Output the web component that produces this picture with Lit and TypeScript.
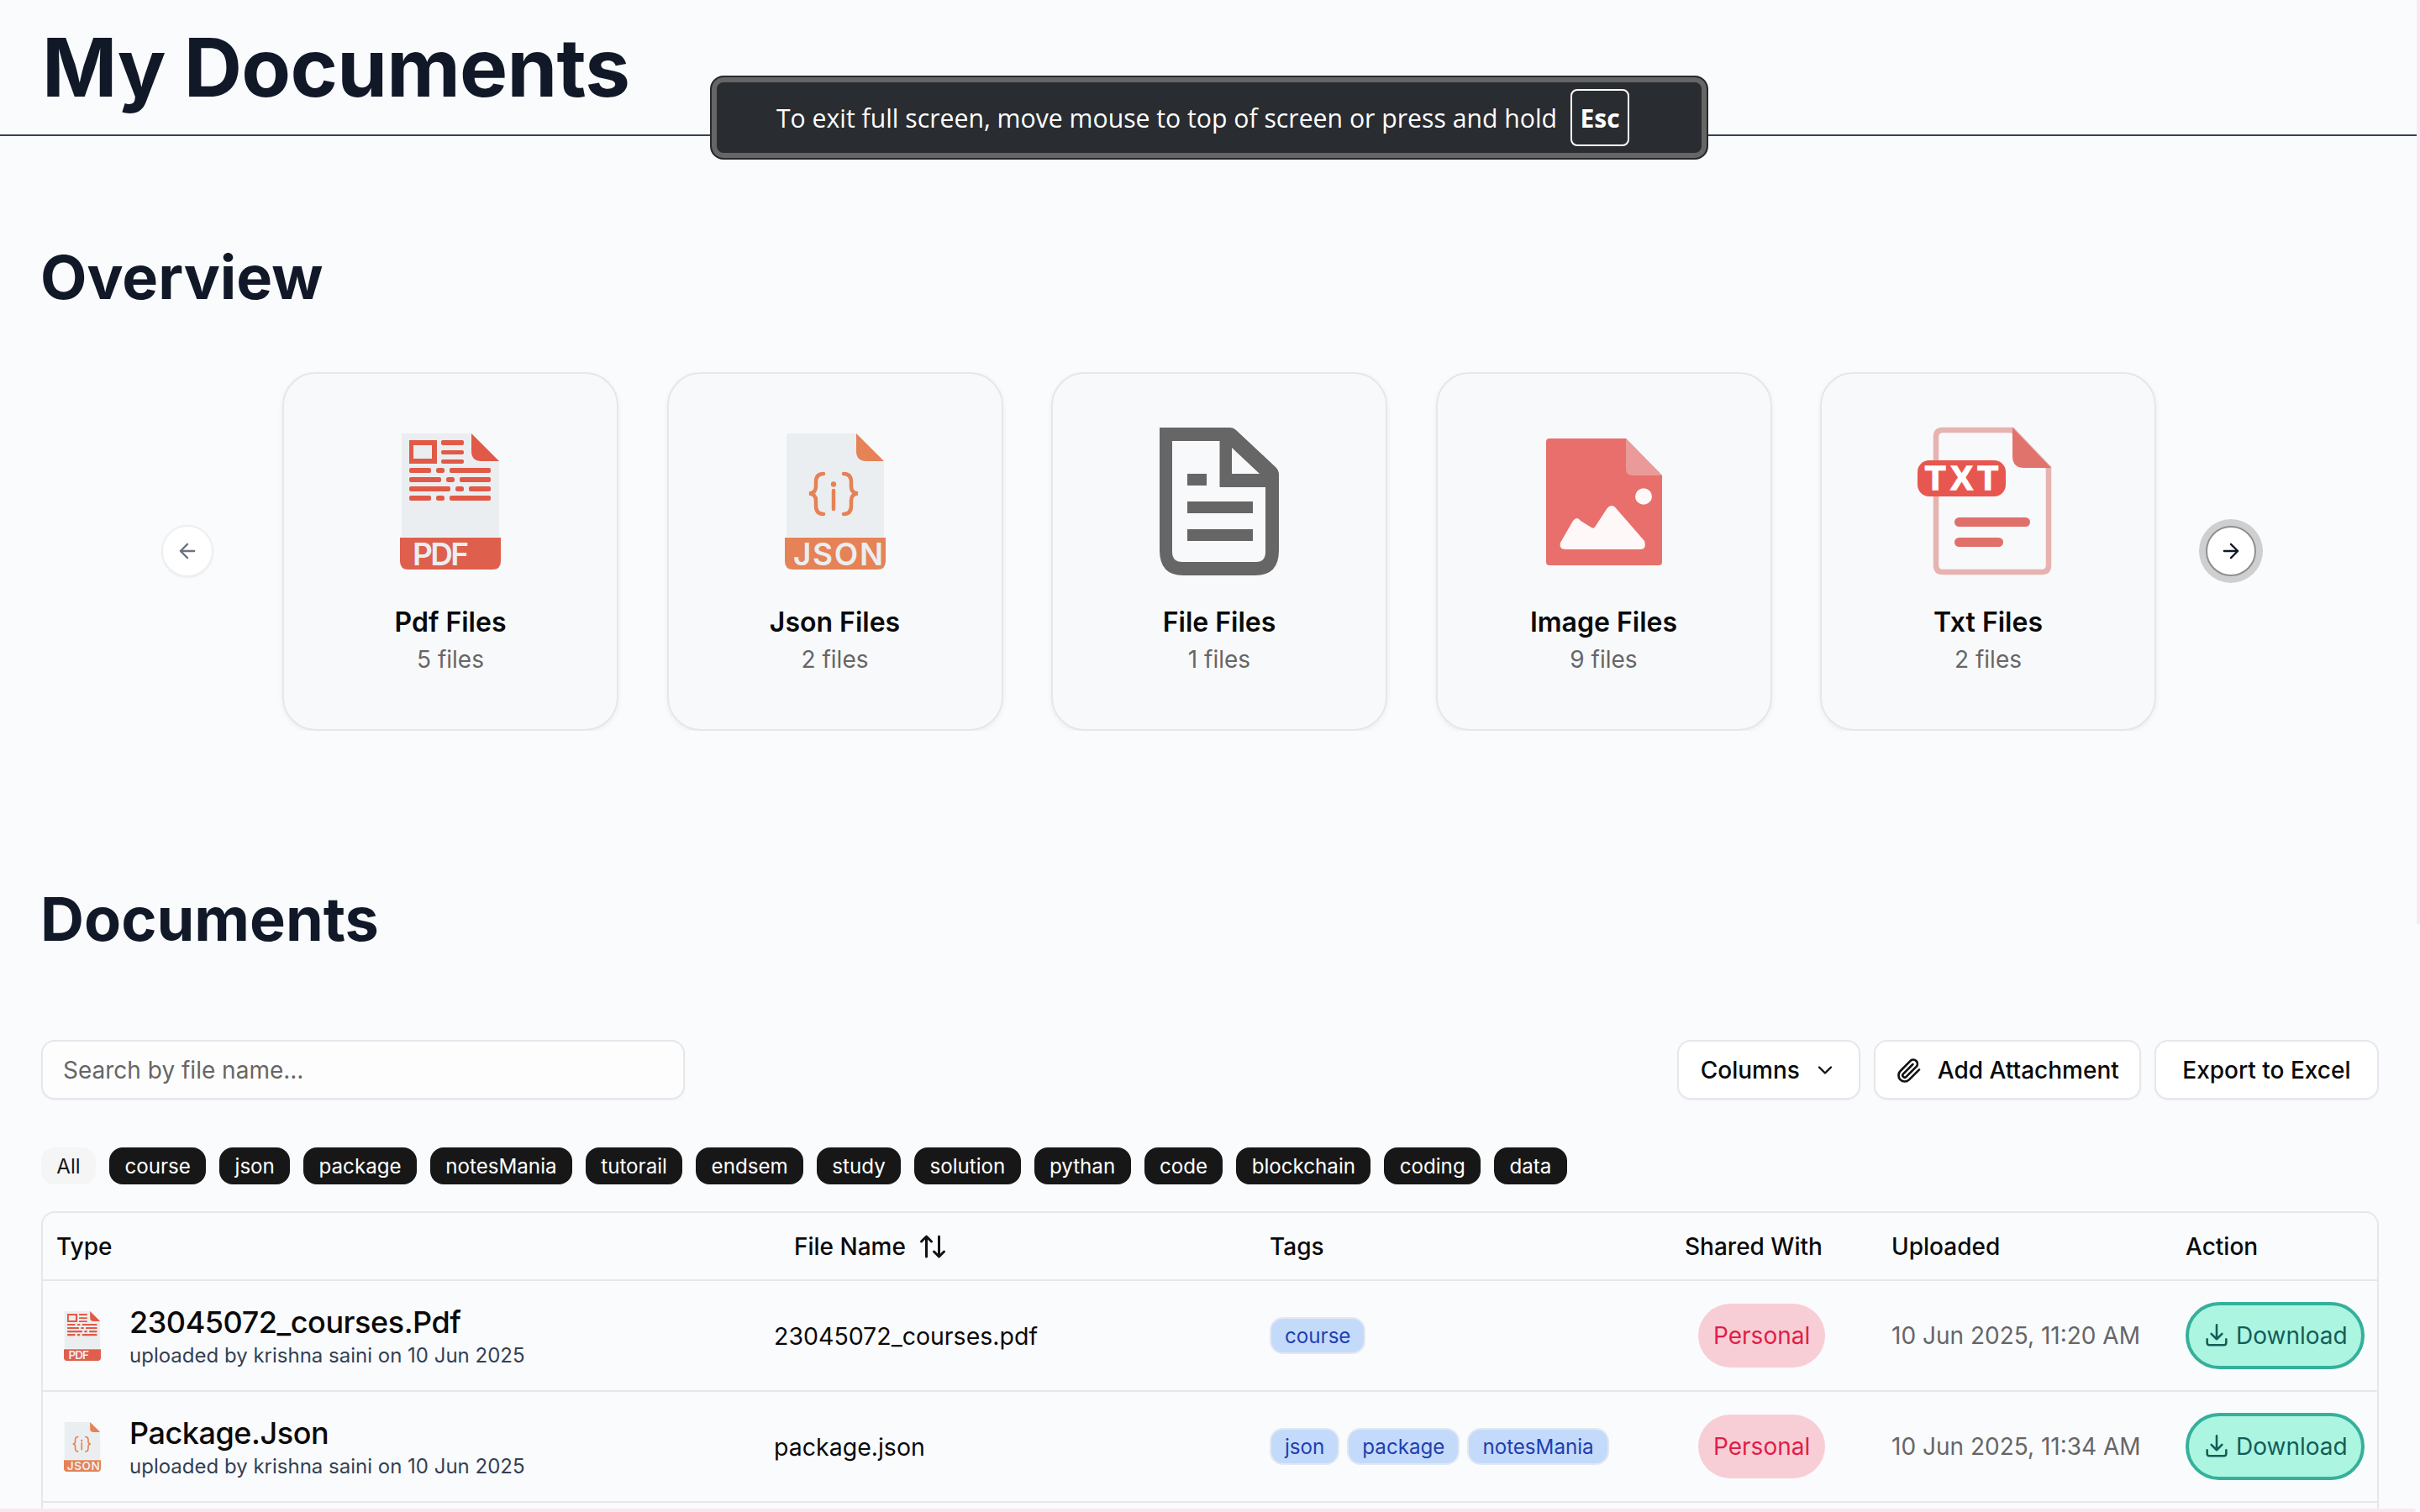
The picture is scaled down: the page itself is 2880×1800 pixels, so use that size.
import { LitElement, html, css, svg } from 'lit';
import { customElement } from 'lit/decorators.js';

const pdfIcon = svg`
  <path d="M2 0H85L118 33V123H2Z" fill="#ebeef0"/>
  <path d="M85 0 118 33H97Q85 33 85 21Z" fill="#e05a47"/>
  <path d="M11 8H44V36H11Z M16 14V30H38V14Z" fill="#e05a47" fill-rule="evenodd"/>
  <g fill="#e05a47">
    <rect x="49" y="8" width="27" height="6" rx="2"/><rect x="49" y="20" width="27" height="5" rx="2"/><rect x="49" y="31" width="27" height="5" rx="2"/>
    <rect x="11" y="41" width="26" height="6" rx="2"/><rect x="43" y="41" width="10" height="6" rx="2.5"/><rect x="59" y="41" width="49" height="6" rx="2"/>
    <rect x="11" y="52" width="38" height="6" rx="2"/><rect x="55" y="52" width="10" height="6" rx="2.5"/><rect x="71" y="52" width="37" height="6" rx="2"/>
    <rect x="11" y="63" width="49" height="6" rx="2"/><rect x="66" y="63" width="10" height="6" rx="2.5"/><rect x="82" y="63" width="26" height="6" rx="2"/>
    <rect x="11" y="74" width="26" height="6" rx="2"/><rect x="43" y="74" width="10" height="6" rx="2.5"/><rect x="59" y="74" width="49" height="6" rx="2"/>
  </g>
  <path d="M0 124H120V152Q120 162 110 162H10Q0 162 0 152Z" fill="#df5f4d"/>
  <text x="15" y="157" class="icon-label" textLength="67">PDF</text>`;

const jsonIcon = svg`
  <path d="M2 0H85L118 33V123H2Z" fill="#ebeef0"/>
  <path d="M85 0 118 33H97Q85 33 85 21Z" fill="#e58256"/>
  <g fill="none" stroke="#e58256" stroke-width="4.5" stroke-linecap="round">
    <path d="M46 48Q37 48 37 58V63Q37 71 29 71.5Q37 72 37 80V86Q37 96 46 96"/>
    <path d="M70 48Q79 48 79 58V63Q79 71 87 71.5Q79 72 79 80V86Q79 96 70 96"/>
    <path d="M58 68V90"/>
  </g>
  <circle cx="58" cy="60.5" r="3.2" fill="#e58256"/>
  <path d="M0 124H120V152Q120 162 110 162H10Q0 162 0 152Z" fill="#e58256"/>
  <text x="10" y="157" class="icon-label" textLength="107">JSON</text>`;

const fileIcon = svg`
  <path fill="#666" fill-rule="evenodd" d="M0 0H84Q88 0 91 3L138 47Q142 51 142 56V146Q142 176 114 176H28Q0 176 0 146Z M15 16V148Q15 160 27 160H115Q126 160 126 148V71H71.5V16Z M86 24V55H119Z"/>
  <path fill="#666" d="M33 55H56V69H33Z M33 88H111V102H33Z M33 121H111V135H33Z"/>`;

const imageIcon = svg`
  <path d="M4 0H95L138 44V147Q138 151 134 151H4Q0 151 0 147V4Q0 0 4 0Z" fill="#e86f6b"/>
  <path d="M95 0 138 44H103Q95 44 95 36Z" fill="#ea9b99"/>
  <ellipse cx="116" cy="69" rx="10" ry="9.7" fill="#fff8f8"/>
  <path d="M17 124L32 98Q37 92 41 98L54 106Q57 108 59 104L72 84Q78 76 84 84L117 122Q120 132 112 132H23Q15 132 17 124Z" fill="#fff8f8"/>`;

const txtIcon = svg`
  <path d="M30 3H113L156 48V164Q156 172 148 172H30Q22 172 22 164V11Q22 3 30 3Z" fill="none" stroke="#e6b3b0" stroke-width="6.5"/>
  <path d="M113 0 159 48H127Q113 48 113 34Z" fill="#e0736b"/>
  <rect x="0" y="39" width="105" height="43" rx="14" fill="#e8574f"/>
  <text x="9" y="74" class="txt-label" textLength="87">TXT</text>
  <rect x="44" y="107" width="90" height="11" rx="5.5" fill="#e0706a"/>
  <rect x="44" y="131" width="58" height="11" rx="5.5" fill="#e0706a"/>`;

const arrowLeft = html`<svg width="28" height="28" viewBox="0 0 24 24" fill="none" stroke="#6b7280" stroke-width="2" stroke-linecap="round" stroke-linejoin="round"><path d="M12 19l-7-7 7-7M5 12h14"/></svg>`;
const arrowRight = html`<svg width="28" height="28" viewBox="0 0 24 24" fill="none" stroke="#111827" stroke-width="2" stroke-linecap="round" stroke-linejoin="round"><path d="M12 5l7 7-7 7M5 12h14"/></svg>`;
const downloadIcon = html`<svg width="34" height="34" viewBox="0 0 24 24" fill="none" stroke="currentColor" stroke-width="1.8" stroke-linecap="round" stroke-linejoin="round"><path d="M4 15v3a2 2 0 0 0 2 2h12a2 2 0 0 0 2-2v-3M12 3v12M7.5 10.5l4.5 4.5 4.5-4.5"/></svg>`;
const clipIcon = html`<svg width="32" height="32" viewBox="0 0 24 24" fill="none" stroke="#111" stroke-width="2" stroke-linecap="round" stroke-linejoin="round"><path d="M21 11.5l-9 9a5.5 5.5 0 0 1-7.8-7.8l9.2-9.2a3.7 3.7 0 0 1 5.2 5.2l-9.2 9.2a1.8 1.8 0 0 1-2.6-2.6l8.5-8.5"/></svg>`;

interface Card { title: string; count: number; w: number; h: number; art: unknown; }

const cards: Card[] = [
  { title: 'Pdf Files', count: 5, w: 120, h: 162, art: pdfIcon },
  { title: 'Json Files', count: 2, w: 120, h: 162, art: jsonIcon },
  { title: 'File Files', count: 1, w: 142, h: 176, art: fileIcon },
  { title: 'Image Files', count: 9, w: 138, h: 151, art: imageIcon },
  { title: 'Txt Files', count: 2, w: 169, h: 176, art: txtIcon },
];

const filters = ['course', 'json', 'package', 'notesMania', 'tutorail', 'endsem', 'study', 'solution', 'pythan', 'code', 'blockchain', 'coding', 'data'];

const rows = [
  { title: '23045072_courses.Pdf', file: '23045072_courses.pdf', art: pdfIcon, tags: ['course'], date: '10 Jun 2025, 11:20 AM' },
  { title: 'Package.Json', file: 'package.json', art: jsonIcon, tags: ['json', 'package', 'notesMania'], date: '10 Jun 2025, 11:34 AM' },
];

@customElement('app-root')
export class AppRoot extends LitElement {
  static styles = css`
    :host {
      display: block;
      position: relative;
      height: 1800px;
      overflow: hidden;
      background: #f9fbfd;
      font-family: Inter, 'Liberation Sans', sans-serif;
      color: #111827;
    }

    svg { overflow: visible; flex: none; }

    .page-header {
      height: 162px;
      box-sizing: border-box;
      padding: 22px 50px 0;
      border-bottom: 2px solid #374151;
      margin-right: 4px;
    }

    h1 {
      margin: 0;
      font-size: 96px;
      line-height: 116px;
      font-weight: 700;
      letter-spacing: -0.75px;
    }

    h2 {
      margin: 0;
      font-size: 72px;
      line-height: 88px;
      font-weight: 700;
      padding-left: 48px;
    }

    .overview { padding-top: 124px; height: 888px; box-sizing: border-box; }

    .carousel {
      display: flex;
      align-items: center;
      height: 427px;
      margin-top: 69px;
      overflow: hidden;
      padding-left: 192px;
    }

    .arrow {
      flex: none;
      width: 62px;
      height: 62px;
      margin-bottom: 2px;
      box-sizing: border-box;
      border-radius: 50%;
      background: #fff;
      border: 2px solid #edeff2;
      display: flex;
      align-items: center;
      justify-content: center;
      box-shadow: 0 1px 2px rgba(0, 0, 0, 0.06);
    }

    .arrow.next {
      width: 60px;
      height: 60px;
      margin-left: 59px;
      border: 2px solid #8f8f8f;
      box-shadow: 0 0 0 8px #cfcfcf;
    }

    .track { display: flex; gap: 57.5px; margin-left: 82px; height: 100%; }

    .card {
      width: 400px;
      height: 427px;
      box-sizing: border-box;
      border: 2px solid #e5e7eb;
      border-radius: 40px;
      background: #f8f9fb;
      box-shadow: 0 2px 6px rgba(0, 0, 0, 0.06);
      display: flex;
      flex-direction: column;
      align-items: center;
    }

    .card-art { height: 224px; display: flex; align-items: center; justify-content: center; margin-top: 40px; }
    .card-title { font-size: 32px; line-height: 40px; font-weight: 600; color: #0a0a0a; margin-top: 12px; }
    .card-count { font-size: 28px; line-height: 40px; color: #666; margin-top: 4px; }

    .icon-label { font: 600 37px Inter, sans-serif; fill: #ebeef0; }
    .txt-label { font: 700 40px 'Liberation Sans', sans-serif; fill: #fff; stroke: #fff; stroke-width: 1.5px; }

    .toolbar {
      display: flex;
      align-items: center;
      justify-content: space-between;
      padding: 0 49px;
    }

    .docs-title { height: 188px; }

    .search {
      width: 766px;
      height: 71px;
      box-sizing: border-box;
      padding: 0 24px;
      display: flex;
      align-items: center;
      font-size: 28px;
      color: #666;
      background: #fdfdfe;
      border: 2px solid #e5e7eb;
      border-radius: 16px;
      box-shadow: 0 1px 2px rgba(0, 0, 0, 0.05);
    }

    .actions { display: flex; gap: 16px; }

    .btn {
      height: 71px;
      box-sizing: border-box;
      padding: 0 24px;
      display: flex;
      align-items: center;
      gap: 18px;
      font-size: 28px;
      font-weight: 500;
      color: #0a0a0a;
      background: #fff;
      border: 2px solid #e5e7eb;
      border-radius: 16px;
      box-shadow: 0 1px 2px rgba(0, 0, 0, 0.05);
    }

    .btn.columns { gap: 16px; padding: 0 26px; }
    .btn.export { padding: 0 31.5px; }

    .filters {
      display: flex;
      gap: 16px;
      margin: 57px 0 0 49px;
    }

    .filter {
      height: 44px;
      padding: 0 18.35px;
      display: flex;
      align-items: center;
      border-radius: 16px;
      font-size: 24.15px;
      background: #171717;
      color: #fff;
    }

    .filter.all { background: #f5f5f5; color: #171717; }

    .table-wrap {
      margin: 32px 49px 0 49px;
      padding-bottom: 20px;
      border: 2px solid #e5e7eb;
      border-radius: 16px;
      background: #fafbfd;
    }

    table { width: 100%; border-collapse: collapse; table-layout: fixed; }
    th {
      height: 79px;
      padding: 0 16px;
      text-align: left;
      font-size: 28px;
      font-weight: 500;
      color: #0a0a0a;
      border-bottom: 2px solid #e5e7eb;
    }
    th .sort { display: inline-flex; align-items: center; gap: 14px; padding-left: 24px; }
    td {
      height: 130px;
      padding: 0 16px;
      font-size: 28.5px;
      color: #0a0a0a;
      border-bottom: 2px solid #e5e7eb;
    }

    .type { display: flex; align-items: center; gap: 34px; padding-left: 9px; }
    .doc-text { padding-top: 2px; }
    .doc-title { font-size: 36px; line-height: 44px; font-weight: 500; letter-spacing: -0.45px; color: #0a0a0a; }
    .doc-sub { font-size: 24px; line-height: 34px; margin-top: 1px; color: #334155; }

    .chips { display: flex; gap: 9px; }
    .chip {
      height: 44px;
      box-sizing: border-box;
      padding: 0 16px;
      display: flex;
      align-items: center;
      font-size: 24.15px;
      color: #1e40af;
      background: #c4dafb;
      border: 2px solid #e2e8f0;
      border-radius: 16px;
    }

    .personal {
      display: inline-flex;
      align-items: center;
      margin-left: 16px;
      height: 76px;
      padding: 0 18px;
      border-radius: 38px;
      font-size: 28px;
      color: #e11d48;
      background: #f8ced6;
    }

    .date { color: #666; font-size: 28px; }

    .download {
      display: inline-flex;
      align-items: center;
      gap: 6px;
      height: 80px;
      box-sizing: border-box;
      padding: 0 16px;
      border: 4px solid #34b09b;
      border-radius: 40px;
      background: #acf5e1;
      color: #115e59;
      font-size: 28px;
    }

    .fs-notice {
      position: absolute;
      left: 845px;
      top: 90px;
      width: 1188px;
      height: 100px;
      box-sizing: border-box;
      display: flex;
      align-items: center;
      justify-content: flex-end;
      gap: 16px;
      padding-right: 92px;
      background: #292c31;
      border: 2px solid #27292d;
      border-radius: 16px;
      box-shadow: inset 0 0 0 6px #666;
      color: #fff;
      font-family: 'Open Sans', 'Noto Sans', sans-serif;
      font-size: 30.2px;
    }

    .esc {
      width: 70px;
      height: 68px;
      box-sizing: border-box;
      display: flex;
      align-items: center;
      justify-content: center;
      border: 2px solid #fff;
      border-radius: 8px;
      font-weight: 700;
      font-size: 30px;
    }

    /* pink scrollbar thumbs of the page */
    .thumb-h {
      position: absolute;
      left: 0;
      width: 2875px;
      bottom: 0;
      height: 4px;
      border-radius: 0 2px 2px 0;
      background: #fbe6f0;
    }

    .thumb-v {
      position: absolute;
      top: 0;
      right: 0;
      width: 4px;
      height: 1100px;
      border-radius: 2px;
      background: #fbe6f0;
    }
  `;

  render() {
    return html`
      <header class="page-header"><h1>My Documents</h1></header>

      <section class="overview">
        <h2>Overview</h2>
        <div class="carousel">
          <div class="arrow">${arrowLeft}</div>
          <div class="track">
            ${cards.map(c => html`
              <div class="card">
                <div class="card-art">
                  <svg width=${c.w} height=${c.h} viewBox="0 0 ${c.w} ${c.h}">${c.art}</svg>
                </div>
                <div class="card-title">${c.title}</div>
                <div class="card-count">${c.count} files</div>
              </div>
            `)}
          </div>
          <div class="arrow next">${arrowRight}</div>
        </div>
      </section>

      <section class="docs">
        <div class="docs-title"><h2>Documents</h2></div>
        <div class="toolbar">
          <div class="search">Search by file name...</div>
          <div class="actions">
            <div class="btn columns">Columns <svg width="28" height="28" viewBox="0 0 24 24" fill="none" stroke="#111" stroke-width="2" stroke-linecap="round" stroke-linejoin="round"><path d="M6 9l6 6 6-6"/></svg></div>
            <div class="btn">${clipIcon} Add Attachment</div>
            <div class="btn export">Export to Excel</div>
          </div>
        </div>

        <div class="filters">
          <div class="filter all">All</div>
          ${filters.map(f => html`<div class="filter">${f}</div>`)}
        </div>

        <div class="table-wrap">
          <table>
            <colgroup>
              <col style="width:854px"><col style="width:590px"><col style="width:494px"><col style="width:246px"><col style="width:350px"><col>
            </colgroup>
            <thead>
              <tr>
                <th>Type</th>
                <th><span class="sort">File Name
                  <svg width="36" height="36" viewBox="0 0 24 24" fill="none" stroke="#111" stroke-width="2" stroke-linecap="round" stroke-linejoin="round"><path d="M21 16l-4 4-4-4M17 20V4M3 8l4-4 4 4M7 4v16"/></svg>
                </span></th>
                <th>Tags</th>
                <th>Shared With</th>
                <th>Uploaded</th>
                <th>Action</th>
              </tr>
            </thead>
            <tbody>
              ${rows.map(r => html`
                <tr>
                  <td>
                    <div class="type">
                      <svg width="44" height="59" viewBox="0 0 120 162" preserveAspectRatio="none">${r.art}</svg>
                      <div class="doc-text">
                        <div class="doc-title">${r.title}</div>
                        <div class="doc-sub">uploaded by krishna saini on 10 Jun 2025</div>
                      </div>
                    </div>
                  </td>
                  <td>${r.file}</td>
                  <td><div class="chips">${r.tags.map(t => html`<span class="chip">${t}</span>`)}</div></td>
                  <td><span class="personal">Personal</span></td>
                  <td class="date">${r.date}</td>
                  <td><span class="download">${downloadIcon} Download</span></td>
                </tr>
              `)}
            </tbody>
          </table>
        </div>
      </section>

      <div class="thumb-v"></div>
      <div class="thumb-h"></div>

      <div class="fs-notice">
        <span>To exit full screen, move mouse to top of screen or press and hold</span>
        <span class="esc">Esc</span>
      </div>
    `;
  }
}

declare global {
  interface HTMLElementTagNameMap {
    'app-root': AppRoot;
  }
}
